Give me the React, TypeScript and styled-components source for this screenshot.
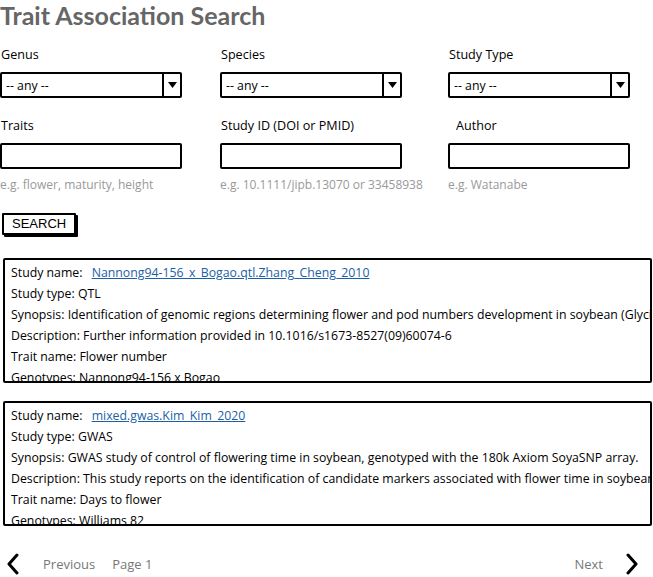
import React from 'react'
import styled, { createGlobalStyle } from 'styled-components'

const GlobalStyle = createGlobalStyle`
	body {
		margin: 0;
		background: #fff;
		font-family: 'Open Sans', 'Liberation Sans', sans-serif;
		color: #000;
	}
`

type Study = {
	name: string
	type: string
	synopsis: string
	description: string
	trait: string
	genotypes: string
}

const studies: Study[] = [
	{
		name: 'Nannong94-156_x_Bogao.qtl.Zhang_Cheng_2010',
		type: 'QTL',
		synopsis:
			'Identification of genomic regions determining flower and pod numbers development in soybean (Glycine max)',
		description: 'Further information provided in 10.1016/s1673-8527(09)60074-6',
		trait: 'Flower number',
		genotypes: 'Nannong94-156 x Bogao',
	},
	{
		name: 'mixed.gwas.Kim_Kim_2020',
		type: 'GWAS',
		synopsis:
			'GWAS study of control of flowering time in soybean, genotyped with the 180k Axiom SoyaSNP array.',
		description:
			'This study reports on the identification of candidate markers associated with flower time in soybean',
		trait: 'Days to flower',
		genotypes: 'Williams 82',
	},
]

const ArrowDown = () => (
	<svg width="9" height="6" viewBox="0 0 9 6">
		<path d="M0 0 L9 0 L4.5 6 Z" fill="#000" />
	</svg>
)

const Chevron: React.FC<{ dir: 'left' | 'right' }> = ({ dir }) => (
	<svg width="14" height="22" viewBox="0 0 14 22">
		<path
			d={dir === 'left' ? 'M11 2 L3 11 L11 20' : 'M3 2 L11 11 L3 20'}
			fill="none"
			stroke="#000"
			strokeWidth="3"
			strokeLinecap="round"
			strokeLinejoin="round"
		/>
	</svg>
)

export default function App() {
	return (
		<Page>
			<GlobalStyle />
			<Title>Trait Association Search</Title>
			<Grid $top={16}>
				<Field>
					<Label>Genus</Label>
					<Select>
						<SelectValue>-- any --</SelectValue>
						<SelectButton>
							<ArrowDown />
						</SelectButton>
					</Select>
				</Field>
				<Field>
					<Label>Species</Label>
					<Select>
						<SelectValue>-- any --</SelectValue>
						<SelectButton>
							<ArrowDown />
						</SelectButton>
					</Select>
				</Field>
				<Field>
					<Label>Study Type</Label>
					<Select>
						<SelectValue>-- any --</SelectValue>
						<SelectButton>
							<ArrowDown />
						</SelectButton>
					</Select>
				</Field>
			</Grid>
			<Grid $top={19}>
				<Field>
					<Label>Traits</Label>
					<TextBox />
					<Hint>e.g. flower, maturity, height</Hint>
				</Field>
				<Field>
					<Label>Study ID (DOI or PMID)</Label>
					<TextBox />
					<Hint>e.g. 10.1111/jipb.13070 or 33458938</Hint>
				</Field>
				<Field>
					<Label $indent={8}>Author</Label>
					<TextBox />
					<Hint>e.g. Watanabe</Hint>
				</Field>
			</Grid>
			<SearchButton>SEARCH</SearchButton>
			<Results>
				{studies.map((s) => (
					<Card key={s.name}>
						<Row>
							Study name: <StudyLink href="#">{s.name}</StudyLink>
						</Row>
						<Row>Study type: {s.type}</Row>
						<Row>Synopsis: {s.synopsis}</Row>
						<Row>Description: {s.description}</Row>
						<Row>Trait name: {s.trait}</Row>
						<Row>Genotypes: {s.genotypes}</Row>
					</Card>
				))}
			</Results>
			<Pager>
				<Chevron dir="left" />
				<PagerText $left={23}>Previous</PagerText>
				<PagerText $left={17}>Page 1</PagerText>
				<Spacer />
				<PagerText>Next</PagerText>
				<ChevronRight>
					<Chevron dir="right" />
				</ChevronRight>
			</Pager>
		</Page>
	)
}

const Page = styled.div`
	width: 653px;
	height: 577px;
	overflow: hidden;
	display: flex;
	flex-direction: column;
`

const Title = styled.h1`
	margin: 0;
	font-family: Lato, 'Open Sans', sans-serif;
	font-size: 25px;
	font-weight: 700;
	color: #666;
	line-height: 30px;
	white-space: nowrap;
`

const Grid = styled.div<{ $top: number }>`
	display: grid;
	grid-template-columns: 220px 228px 1fr;
	margin-top: ${(p) => p.$top}px;
`

const Field = styled.div`
	display: flex;
	flex-direction: column;
`

const Label = styled.div<{ $indent?: number }>`
	font-size: 12.6px;
	line-height: 18px;
	margin-left: ${(p) => p.$indent ?? 1}px;
	margin-bottom: 8px;
`

const Select = styled.div`
	width: 182px;
	height: 26px;
	box-sizing: border-box;
	border: 2px solid #000;
	border-radius: 2px;
	display: flex;
	align-items: center;
`

const SelectValue = styled.div`
	flex: 1;
	font-size: 12.3px;
	padding-left: 4px;
`

const SelectButton = styled.div`
	width: 16px;
	height: 100%;
	border-left: 2px solid #000;
	display: flex;
	align-items: center;
	justify-content: center;
`

const TextBox = styled.div`
	width: 182px;
	height: 26px;
	box-sizing: border-box;
	border: 2px solid #000;
	border-radius: 2px;
`

const Hint = styled.div`
	font-size: 12px;
	color: #999;
	margin-top: 7px;
	line-height: 18px;
	white-space: nowrap;
`

const SearchButton = styled.button`
	align-self: flex-start;
	margin: 19px 0 0 2px;
	padding: 0 8px;
	height: 22px;
	box-sizing: border-box;
	background: #fff;
	border: 2px solid #000;
	border-radius: 1px;
	box-shadow: 2px 2px 0 #000;
	font-family: 'Liberation Sans', sans-serif;
	font-size: 13px;
	line-height: 16px;
	color: #000;
`

const Results = styled.div`
	display: flex;
	flex-direction: column;
	gap: 18px;
	margin: 23px 1px 0 3px;
`

const Card = styled.div`
	height: 125px;
	box-sizing: border-box;
	border: 2px solid #000;
	border-radius: 2px;
	padding: 2px 6px 0;
	overflow: hidden;
`

const Row = styled.div`
	font-size: 12.3px;
	line-height: 21px;
	white-space: nowrap;
`

const StudyLink = styled.a`
	color: #1b5fa6;
	text-decoration: underline;
	margin-left: 6px;
`

const Pager = styled.div`
	display: flex;
	align-items: center;
	margin-top: 27px;
	padding: 0 14px 0 6px;
`

const PagerText = styled.span<{ $left?: number }>`
	font-size: 13px;
	color: #777;
	margin-left: ${(p) => p.$left ?? 0}px;
`

const Spacer = styled.div`
	flex: 1;
`

const ChevronRight = styled.div`
	margin-left: 22px;
	display: flex;
`
